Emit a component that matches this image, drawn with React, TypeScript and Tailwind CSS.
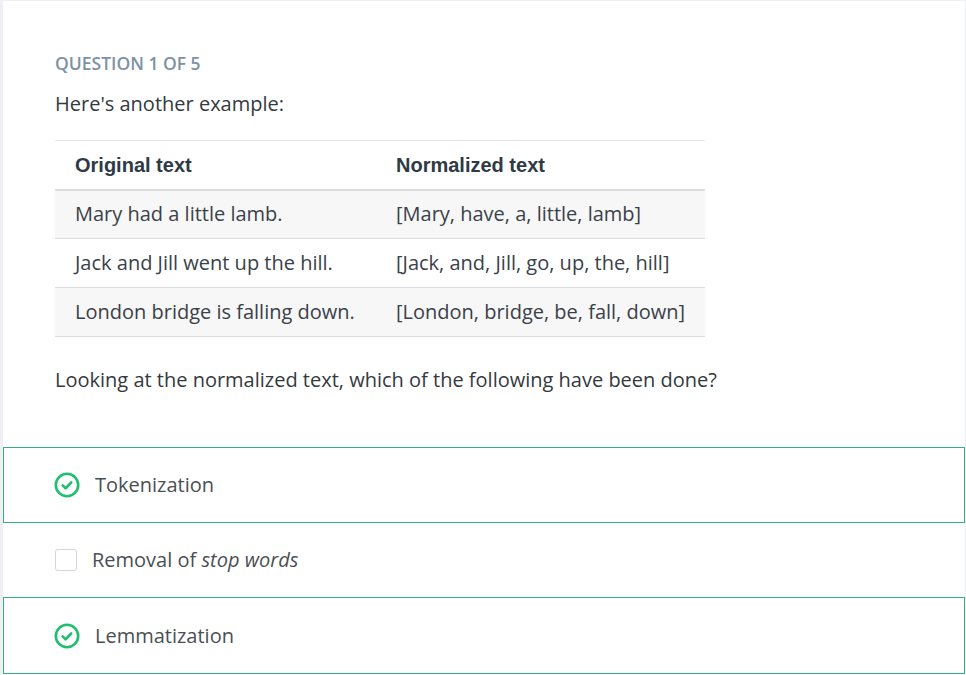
import React from 'react';

const rows = [
  ['Mary had a little lamb.', '[Mary, have, a, little, lamb]'],
  ['Jack and Jill went up the hill.', '[Jack, and, Jill, go, up, the, hill]'],
  ['London bridge is falling down.', '[London, bridge, be, fall, down]'],
];

const CheckCircle = () => (
  <svg width="26" height="26" viewBox="0 0 26 26" fill="none">
    <circle cx="13" cy="13" r="11.2" stroke="#1fbf6f" strokeWidth="2.6" />
    <path d="M8.6 13.4l3 2.9 5.6-5.8" stroke="#1fbf6f" strokeWidth="2.6" strokeLinecap="round" strokeLinejoin="round" />
  </svg>
);

const App: React.FC = () => {
  return (
    <div className="min-h-[675px] bg-[#eef0f3] pl-[3px] pt-px pr-px" style={{ fontFamily: '"Open Sans", sans-serif' }}>
      <div className="bg-white min-h-[674px] pt-[50px]">
        <div className="px-[52px]">
          <div className="text-[17.5px] font-semibold text-[#7d92a6] uppercase leading-[24px]">Question 1 of 5</div>
          <p className="mt-[15px] text-[20px] leading-[28px] text-[#333a40]">Here's another example:</p>

          <table className="mt-[22px] w-[650px] table-fixed border-collapse text-[20px] text-[#3a4149] whitespace-nowrap">
            <thead>
              <tr className="border-t border-[#e4e4e4] border-b-2 border-b-[#dddddd]">
                <th className="h-[49px] w-[321px] px-5 text-left font-bold text-[#2e3a45]" style={{ fontFamily: '"Liberation Sans", Arial, sans-serif' }}>Original text</th>
                <th className="h-[49px] px-5 text-left font-bold text-[#2e3a45]" style={{ fontFamily: '"Liberation Sans", Arial, sans-serif' }}>Normalized text</th>
              </tr>
            </thead>
            <tbody>
              {rows.map((r, i) => (
                <tr key={i} className={`border-b border-[#dddddd] ${i % 2 === 0 ? 'bg-[#f7f7f7]' : 'bg-white'}`}>
                  <td className="h-[49px] px-5">{r[0]}</td>
                  <td className="h-[49px] px-5">{r[1]}</td>
                </tr>
              ))}
            </tbody>
          </table>

          <p className="mt-[29px] text-[20px] leading-[28px] text-[#333a40]">Looking at the normalized text, which of the following have been done?</p>
        </div>

        <div className="mt-[53px] text-[20px] text-[#4a4f54]">
          <div className="h-[76px] border border-[#37b07f] flex items-center pl-[50px] gap-[15px]">
            <CheckCircle />
            <span>Tokenization</span>
          </div>
          <div className="h-[74px] flex items-center pl-[52px] gap-[15px]">
            <span className="w-[22px] h-[22px] rounded-[3px] border border-[#d6d6d6] bg-white" />
            <span>Removal of <em>stop words</em></span>
          </div>
          <div className="h-[77px] border border-[#37b07f] flex items-center pl-[50px] gap-[15px]">
            <CheckCircle />
            <span>Lemmatization</span>
          </div>
        </div>
      </div>
    </div>
  );
};

export default App;
